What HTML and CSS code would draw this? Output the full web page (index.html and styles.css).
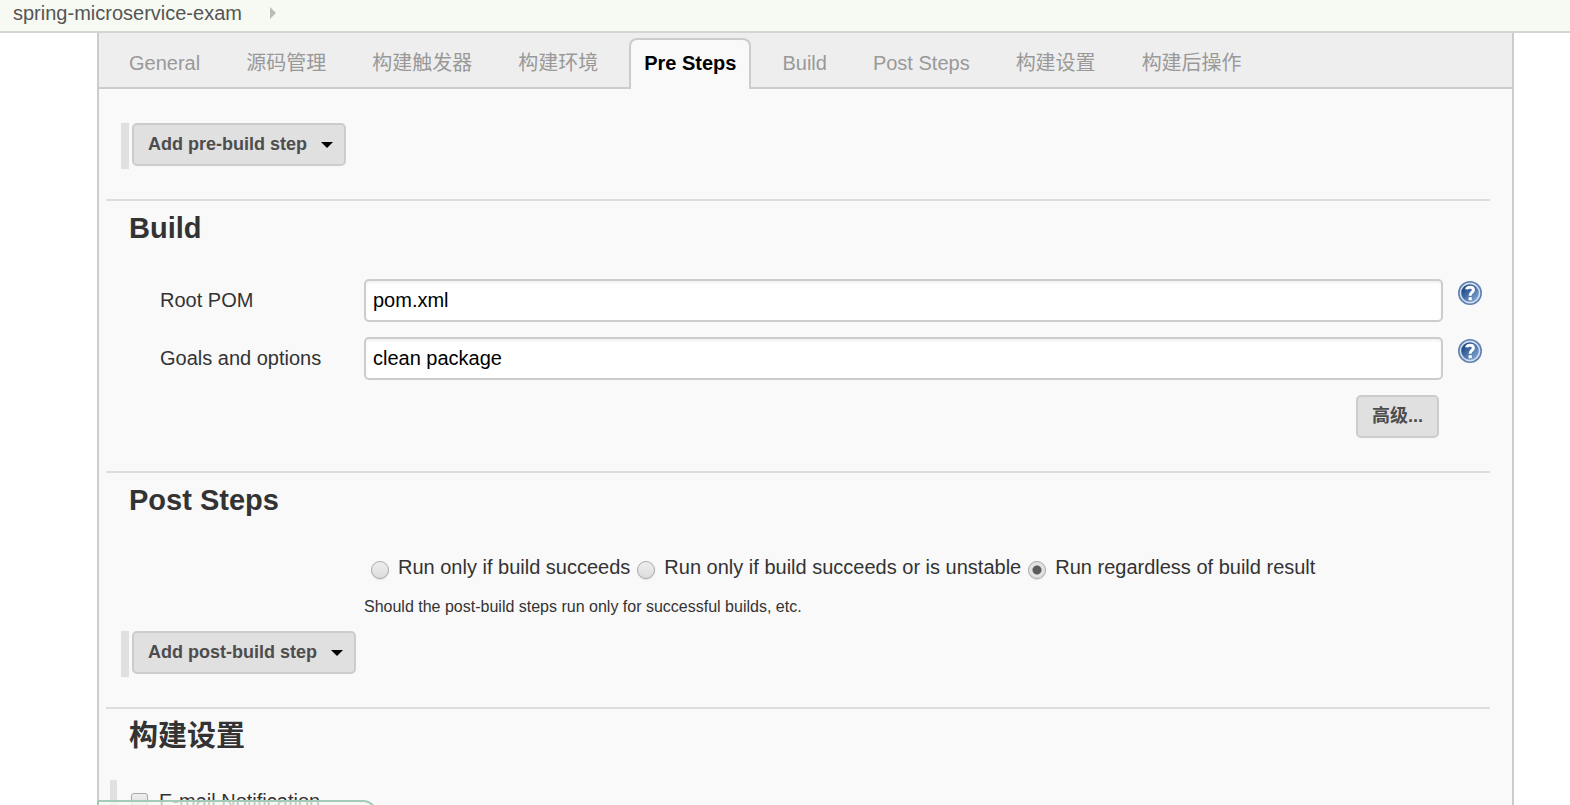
FILE: index.html
```html
<!DOCTYPE html>
<html lang="zh-CN">
<head>
<meta charset="utf-8">
<title>spring-microservice-exam Config</title>
<link rel="stylesheet" href="styles.css">
</head>
<body>
<svg class="defs" aria-hidden="true">
  <defs>
    <linearGradient id="help-fill" x1="0" y1="0" x2="1" y2="1">
      <stop offset="0.15" stop-color="#16427f"/>
      <stop offset="0.9" stop-color="#86a9d6"/>
    </linearGradient>
    <symbol id="help" viewBox="0 0 24 24">
      <circle cx="12" cy="12" r="12" fill="#5f82b3"/>
      <circle cx="12" cy="12" r="9.6" fill="url(#help-fill)" stroke="#d3dfee" stroke-width="1.6"/>
      <path d="M8.6 8.4C9 5.4 15.4 5.2 15.4 8.9C15.4 11.6 12.1 11.3 12.1 14.8" fill="none" stroke="#fff" stroke-width="3"/>
      <rect x="10.6" y="16.2" width="3.2" height="3" fill="#fff"/>
    </symbol>
  </defs>
</svg>
<nav class="breadcrumb">
  <a class="crumb" href="#">spring-microservice-exam</a>
  <span class="crumb-arrow"></span>
</nav>
<main class="panel">
  <nav class="tabs">
    <a class="tab" href="#">General</a>
    <a class="tab" href="#">源码管理</a>
    <a class="tab" href="#">构建触发器</a>
    <a class="tab" href="#">构建环境</a>
    <a class="tab active" href="#">Pre Steps</a>
    <a class="tab" href="#">Build</a>
    <a class="tab" href="#">Post Steps</a>
    <a class="tab" href="#">构建设置</a>
    <a class="tab" href="#">构建后操作</a>
  </nav>
  <form class="config">
    <div class="step">
      <button class="btn menu-btn" type="button">Add pre-build step<span class="caret"></span></button>
    </div>

    <section class="section build">
      <h2 class="heading">Build</h2>
      <div class="row">
        <label class="label" for="pom">Root POM</label>
        <input class="field" id="pom" type="text" value="pom.xml">
        <a class="help" href="#" aria-label="Help"><svg class="help-icon"><use href="#help"/></svg></a>
      </div>
      <div class="row">
        <label class="label" for="goals">Goals and options</label>
        <input class="field" id="goals" type="text" value="clean package">
        <a class="help" href="#" aria-label="Help"><svg class="help-icon"><use href="#help"/></svg></a>
      </div>
      <div class="advanced">
        <button class="btn" type="button">高级...</button>
      </div>
    </section>

    <section class="section">
      <h2 class="heading">Post Steps</h2>
      <div class="choices">
        <label class="choice"><input class="radio" type="radio" name="run">Run only if build succeeds</label>
        <label class="choice"><input class="radio" type="radio" name="run">Run only if build succeeds or is unstable</label>
        <label class="choice"><input class="radio" type="radio" name="run" checked>Run regardless of build result</label>
      </div>
      <p class="hint">Should the post-build steps run only for successful builds, etc.</p>
      <div class="step">
        <button class="btn menu-btn" type="button">Add post-build step<span class="caret"></span></button>
      </div>
    </section>

    <section class="section">
      <h2 class="heading">构建设置</h2>
      <div class="option">
        <label class="option-label"><input class="check" type="checkbox">E-mail Notification</label>
      </div>
    </section>
  </form>
</main>
<div class="sticker"></div>
</body>
</html>
```

FILE: styles.css
```css
* {
  box-sizing: border-box;
}

html {
  overflow: hidden;
}

body {
  margin: 0;
  background: #fff;
  color: #333;
  font: 20px/24px "Liberation Sans", Arial, "Noto Sans CJK SC", sans-serif;
}

.defs {
  position: absolute;
  width: 0;
  height: 0;
}

.breadcrumb {
  display: flex;
  align-items: center;
  gap: 28px;
  height: 33px;
  padding: 0 13px 5px;
  background: #f6faf2;
  border-bottom: 2px solid #d3d6cf;
}

.crumb {
  color: #555;
  text-decoration: none;
}

.crumb-arrow {
  border: 6px solid transparent;
  border-left-color: #b9bdb6;
  border-right-width: 0;
}

.panel {
  margin: 0 56px 0 97px;
  border: 2px solid #ccc;
  border-width: 0 2px;
  background: #f9f9f9;
}

.tabs {
  display: flex;
  align-items: flex-end;
  gap: 16px;
  padding: 5px 15px 0;
  background: #eee;
  border-bottom: 2px solid #ccc;
}

.tab {
  height: 51px;
  margin-bottom: -2px;
  padding: 11px 13px 0;
  border: 2px solid transparent;
  border-bottom: 0;
  border-radius: 8px 8px 0 0;
  color: #999;
  text-decoration: none;
  white-space: nowrap;
}

.tab.active {
  background: #f9f9f9;
  border-color: #ccc;
  color: #000;
  font-weight: bold;
}

.config {
  padding: 34px 22px 0 7px;
}

.step {
  height: 46px;
  margin: 0 0 30px 15px;
  padding-left: 3px;
  border-left: 8px solid #e0e0e0;
}

.btn {
  display: inline-flex;
  align-items: center;
  gap: 14px;
  height: 43px;
  padding: 0 14px 2px;
  border: 2px solid #ccc;
  border-radius: 5px;
  background: #e0e0e0;
  color: #4d4d4d;
  font: bold 18px/24px "Liberation Sans", Arial, "Noto Sans CJK SC", sans-serif;
}

.menu-btn {
  padding-right: 11px;
}

.caret {
  margin-top: 3px;
  border: 6px solid transparent;
  border-top-color: #000;
  border-bottom-width: 0;
}

.section {
  padding-top: 10px;
  border-top: 2px solid #ddd;
}

.build {
  padding-bottom: 33px;
}

.heading {
  margin: 0 0 34px 23px;
  font-size: 29px;
  line-height: 34px;
}

.row {
  display: grid;
  grid-template-columns: 204px 1fr 24px;
  align-items: center;
  margin: 0 8px 15px 54px;
}

.label {
  padding-bottom: 2px;
}

.field {
  height: 43px;
  margin-right: 15px;
  padding: 0 7px;
  border: 2px solid #ccc;
  border-radius: 5px;
  background: #fff;
  box-shadow: inset 0 2px 3px #f2f2f2;
  color: #000;
  font: inherit;
}

.help {
  align-self: start;
  height: 24px;
  margin-top: 2px;
}

.help-icon {
  display: block;
  width: 24px;
  height: 24px;
}

.advanced {
  display: flex;
  justify-content: flex-end;
  padding-right: 51px;
}

.choices {
  display: flex;
  gap: 7px;
  margin: 38px 0 0 265px;
}

.choice {
  display: flex;
  align-items: center;
  gap: 9px;
  white-space: nowrap;
}

.radio,
.check {
  appearance: none;
  flex: none;
  width: 18px;
  height: 18px;
  margin: 6px 0 0;
  border: 1px solid #aaa;
  border-radius: 50%;
  background: linear-gradient(#eee, #dcdcdc);
  box-shadow: 0 1px 1px #ddd;
}

.radio:checked {
  background: radial-gradient(circle, #5c5c5c 4px, #e2e2e2 5px);
}

.hint {
  margin: 18px 0 14px 258px;
  font-size: 16px;
  line-height: 20px;
}

.option {
  height: 46px;
  margin: -7px 0 0 4px;
  padding: 9px 0 0 14px;
  border-left: 7px solid #e0e0e0;
}

.option-label {
  display: flex;
  align-items: center;
  gap: 11px;
}

.check {
  width: 17px;
  height: 17px;
  margin: 0;
  border-radius: 3px;
}

.sticker {
  position: fixed;
  left: 97px;
  bottom: -55px;
  width: 280px;
  height: 60px;
  border: 2px solid #a4cbb8;
  border-radius: 0 14px 0 0;
  background: rgba(246, 250, 242, 0.75);
}
```
